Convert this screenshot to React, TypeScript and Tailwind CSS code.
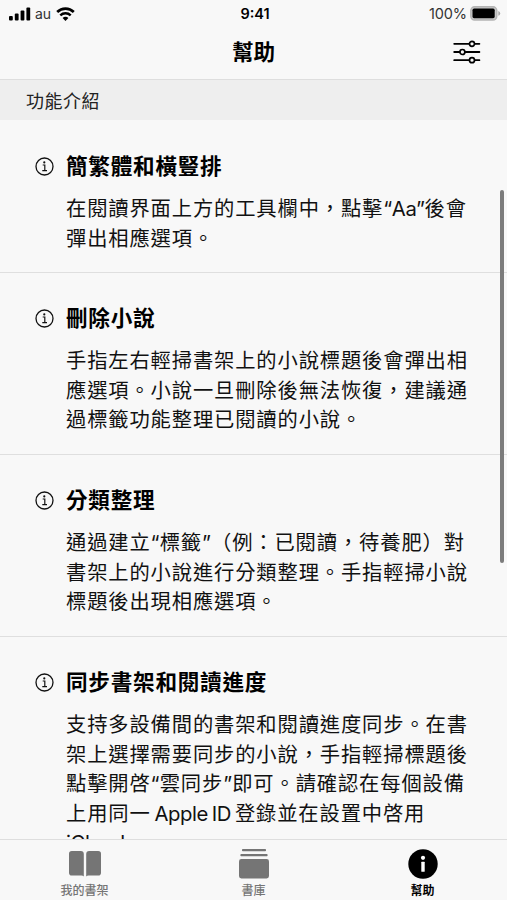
import { ReactNode } from 'react';

interface HelpItem {
  title: string;
  lines: ReactNode[];
}

function Latin({ children }: { children: ReactNode }) {
  return <span className="tracking-[-0.4px]">{children}</span>;
}

function Quote({ children }: { children: ReactNode }) {
  return <span className="tracking-[0.1px]">{children}</span>;
}

const helpItems: HelpItem[] = [
  {
    title: '簡繁體和橫豎排',
    lines: [
      <>在閱讀界面上方的工具欄中，點擊<Latin>“Aa”</Latin>後會</>,
      '彈出相應選項。',
    ],
  },
  {
    title: '刪除小說',
    lines: [
      '手指左右輕掃書架上的小說標題後會彈出相',
      '應選項。小說一旦刪除後無法恢復，建議通',
      '過標籤功能整理已閱讀的小說。',
    ],
  },
  {
    title: '分類整理',
    lines: [
      <>通過建立<Quote>“</Quote>標籤<Quote>”</Quote>（例：已閱讀，待養肥）對</>,
      '書架上的小說進行分類整理。手指輕掃小說',
      '標題後出現相應選項。',
    ],
  },
  {
    title: '同步書架和閱讀進度',
    lines: [
      '支持多設備間的書架和閱讀進度同步。在書',
      '架上選擇需要同步的小說，手指輕掃標題後',
      <>點擊開啓<Quote>“</Quote>雲同步<Quote>”</Quote>即可。請確認在每個設備</>,
      <>上用同一<Latin><span className="[word-spacing:-1.5px]"> Apple ID </span></Latin>登錄並在設置中啓用</>,
      <Latin>iCloud。</Latin>,
    ],
  },
];

function SignalIcon() {
  return (
    <svg width="22" height="14" viewBox="0 0 22 14" fill="#000">
      <rect x="0" y="9" width="3.8" height="4.6" rx="1" />
      <rect x="5.8" y="6.5" width="3.8" height="7.1" rx="1" />
      <rect x="11.6" y="3.6" width="3.8" height="10" rx="1" />
      <rect x="17.4" y="0.4" width="3.8" height="13.2" rx="1" />
    </svg>
  );
}

function WifiIcon() {
  return (
    <svg width="19" height="14" viewBox="0 0 19 14" fill="none" stroke="#000">
      <path d="M1.2 5 A11.8 11.8 0 0 1 17.8 5" strokeWidth="2.7" />
      <path d="M4.3 8.4 A7.4 7.4 0 0 1 14.7 8.4" strokeWidth="2.4" />
      <path d="M6.6 11 A4 4 0 0 1 12.4 11 L9.5 13.9 Z" fill="#000" stroke="none" />
    </svg>
  );
}

function BatteryIcon() {
  return (
    <svg width="31" height="15" viewBox="0 0 31 15">
      <rect x="0.8" y="0.8" width="26" height="13.2" rx="3.8" fill="#c8c8c8" stroke="#b4b4b4" strokeWidth="1.4" />
      <rect x="2.5" y="2.6" width="22.2" height="9.6" rx="1.6" fill="#000" />
      <path d="M28.3 5 Q30.2 5.8 30.2 7.4 Q30.2 9 28.3 9.8 Z" fill="#a8a8a8" />
    </svg>
  );
}

function SlidersIcon() {
  return (
    <svg width="28" height="24" viewBox="0 0 28 24" fill="none" stroke="#000" strokeWidth="1.8" strokeLinecap="round">
      <path d="M1.2 3.8H16M22 3.8H26.4M1.2 12H6.5M12.5 12H26.4M1.2 20.2H16M22 20.2H26.4" />
      <circle cx="19" cy="3.8" r="2.5" strokeWidth="1.7" />
      <circle cx="9.4" cy="12" r="2.5" strokeWidth="1.7" />
      <circle cx="19" cy="20.2" r="2.5" strokeWidth="1.7" />
    </svg>
  );
}

function InfoIcon() {
  return (
    <svg width="19" height="19" viewBox="0 0 19 19" fill="none" stroke="#111">
      <circle cx="9.5" cy="9.5" r="8.5" strokeWidth="1.3" />
      <circle cx="9.3" cy="5.4" r="1.1" fill="#111" stroke="none" />
      <path d="M7.7 8H9.8V13.5M7.3 13.6H12" strokeWidth="1.2" />
    </svg>
  );
}

function BookIcon() {
  return (
    <svg width="34" height="28" viewBox="0 0 34 28" fill="#757575">
      <path d="M3.8 1H12.8Q15.8 1 15.8 4V26.6Q15 25.6 13.4 25.6H3.8Q1 25.6 1 22.8V3.8Q1 1 3.8 1Z" />
      <path d="M30.2 1H21.2Q18.2 1 18.2 4V26.6Q19 25.6 20.6 25.6H30.2Q33 25.6 33 22.8V3.8Q33 1 30.2 1Z" />
    </svg>
  );
}

function StackIcon() {
  return (
    <svg width="32" height="30" viewBox="0 0 32 30" fill="#757575">
      <rect x="4" y="0" width="24" height="2.2" rx="0.8" />
      <rect x="2.4" y="5" width="27.2" height="2.2" rx="0.8" />
      <rect x="1" y="10" width="30" height="19.5" rx="2.4" />
    </svg>
  );
}

function InfoFilledIcon() {
  return (
    <svg width="30" height="30" viewBox="0 0 30 30">
      <circle cx="15" cy="15" r="14.7" fill="#000" />
      <circle cx="15" cy="8.8" r="2.1" fill="#fff" />
      <rect x="13.3" y="12.8" width="3.4" height="10" rx="0.5" fill="#fff" />
    </svg>
  );
}

const tabs = [
  { label: '我的書架', icon: <BookIcon />, active: false },
  { label: '書庫', icon: <StackIcon />, active: false },
  { label: '幫助', icon: <InfoFilledIcon />, active: true },
];

export default function App() {
  return (
    <div
      lang="zh-Hant"
      className="relative flex h-[900px] w-[507px] flex-col overflow-hidden bg-[#f8f8f8] font-[Inter,'Noto_Sans_CJK_TC',sans-serif] text-[#111] [text-spacing-trim:space-all]"
    >
      <div className="grid h-[27px] shrink-0 grid-cols-3 items-center pr-[6px] pl-[9px]">
        <div className="flex items-center">
          <SignalIcon />
          <span className="ml-[4px] text-[14px] text-[#333]">au</span>
          <span className="ml-[5px]"><WifiIcon /></span>
        </div>
        <span className="text-center text-[14.5px] font-semibold text-black">9:41</span>
        <div className="flex items-center justify-end gap-[3px]">
          <span className="text-[14.5px] tracking-[-0.1px] text-[#333]">100%</span>
          <BatteryIcon />
        </div>
      </div>

      <header className="grid h-[53px] shrink-0 grid-cols-3 items-center border-b border-[#dedede] px-[26px] pb-[2px]">
        <h1 className="col-start-2 text-center text-[21.6px] font-bold text-black">幫助</h1>
        <div className="flex justify-end"><SlidersIcon /></div>
      </header>

      <div className="flex h-[40px] shrink-0 items-center bg-[#eee] pt-[3px] pl-[26px] text-[18px] tracking-[0.5px] text-[#222]">
        功能介紹
      </div>

      <main className="min-h-0 flex-1 overflow-hidden">
        {helpItems.map((item, i) => (
          <section
            key={item.title}
            className={`flex border-b border-[#dfdfdf] pl-[35px] ${i === 0 ? 'pt-[31px] pb-[18.8px]' : 'pt-[30px] pb-[19.2px]'}`}
          >
            <div className="mt-[6px] mr-[12px] shrink-0"><InfoIcon /></div>
            <div>
              <h2 className="text-[21.6px] leading-[30px] font-bold tracking-[0.75px] text-black">{item.title}</h2>
              <div className="mt-[13px] text-[20.3px] leading-[29.6px] tracking-[0.87px]">
                {item.lines.map((line, n) => (
                  <p key={n} className="whitespace-pre">{line}</p>
                ))}
              </div>
            </div>
          </section>
        ))}
      </main>

      <nav className="grid h-[61px] shrink-0 grid-cols-3 border-t border-[#dedede]">
        {tabs.map((tab) => (
          <div key={tab.label} className="flex flex-col items-center pt-[8px]">
            <div className="flex h-[31px] items-center">{tab.icon}</div>
            <span
              className={`mt-[4px] text-[12px] leading-[16px] ${tab.active ? 'font-bold text-black' : 'font-medium text-[#757575]'}`}
            >
              {tab.label}
            </span>
          </div>
        ))}
      </nav>

      <div className="absolute top-[190px] right-[3px] h-[373px] w-[4px] rounded-full bg-[#7c7c7c]" />
    </div>
  );
}
